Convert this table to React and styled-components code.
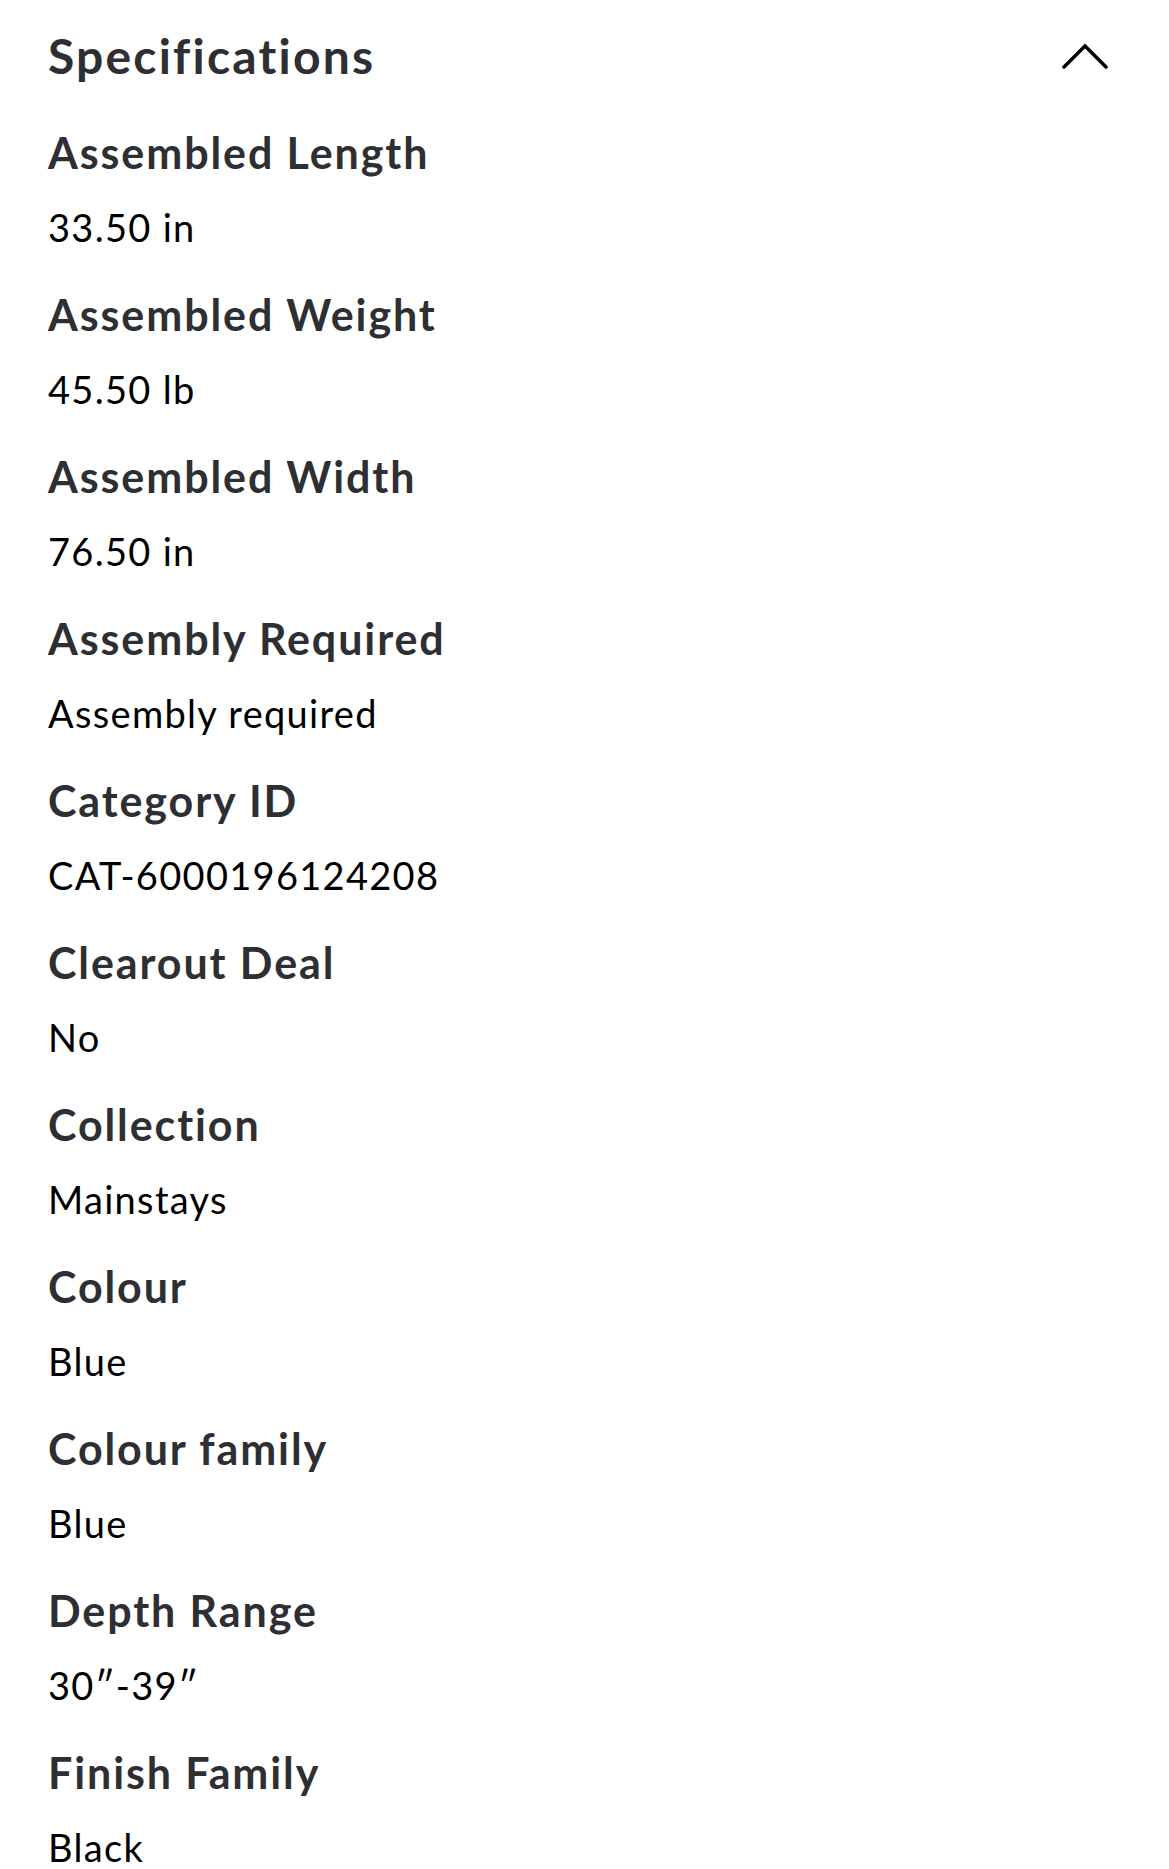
import React from "react";
import styled, { createGlobalStyle } from "styled-components";

const Global = createGlobalStyle`
  html, body { margin: 0; padding: 0; background: #ffffff; }
  body { font-family: Lato, "Open Sans", sans-serif; -webkit-font-smoothing: antialiased; }
`;

const Section = styled.section`
  display: flex;
  flex-direction: column;
  padding: 0 61px 0 48px;
  background: #ffffff;
`;

const Header = styled.div`
  display: flex;
  align-items: center;
  justify-content: space-between;
  height: 56px;
  padding-top: 28px;
  margin-bottom: 41px;
`;

const Title = styled.h2`
  margin: 0;
  font-family: Lato, sans-serif;
  font-weight: 700;
  font-size: 48px;
  line-height: 56px;
  letter-spacing: 2.2px;
  color: #2e2f32;
`;

const Toggle = styled.button`
  display: flex;
  align-items: center;
  justify-content: center;
  width: 46px;
  height: 30px;
  padding: 0;
  border: 0;
  background: transparent;
  cursor: pointer;
`;

const List = styled.dl`
  display: flex;
  flex-direction: column;
  gap: 32px;
  margin: 0;
`;

const Item = styled.div`
  display: flex;
  flex-direction: column;
  gap: 18px;
`;

const Label = styled.dt`
  margin: 0;
  font-family: Lato, sans-serif;
  font-weight: 700;
  font-size: 43px;
  line-height: 56px;
  letter-spacing: 1.9px;
  color: #2e2f32;
  white-space: nowrap;
`;

const Value = styled.dd`
  margin: 0;
  font-family: Lato, sans-serif;
  font-weight: 400;
  font-size: 38px;
  line-height: 56px;
  letter-spacing: 1.3px;
  color: #000000;
  white-space: nowrap;
`;

const specs = [
  ["Assembled Length", "33.50 in"],
  ["Assembled Weight", "45.50 lb"],
  ["Assembled Width", "76.50 in"],
  ["Assembly Required", "Assembly required"],
  ["Category ID", "CAT-6000196124208"],
  ["Clearout Deal", "No"],
  ["Collection", "Mainstays"],
  ["Colour", "Blue"],
  ["Colour family", "Blue"],
  ["Depth Range", "30\u2033-39\u2033"],
  ["Finish Family", "Black"],
];

function ChevronUp() {
  return (
    <svg width="46" height="26" viewBox="0 0 46 26" fill="none">
      <path d="M2 24 L23 3 L44 24" stroke="#000" strokeWidth="3.5" strokeLinecap="round" strokeLinejoin="miter" />
    </svg>
  );
}

export default function App() {
  return (
    <>
      <Global />
      <Section>
        <Header>
          <Title>Specifications</Title>
          <Toggle aria-label="Collapse specifications">
            <ChevronUp />
          </Toggle>
        </Header>
        <List>
          {specs.map(([label, value]) => (
            <Item key={label}>
              <Label>{label}</Label>
              <Value>{value}</Value>
            </Item>
          ))}
        </List>
      </Section>
    </>
  );
}
